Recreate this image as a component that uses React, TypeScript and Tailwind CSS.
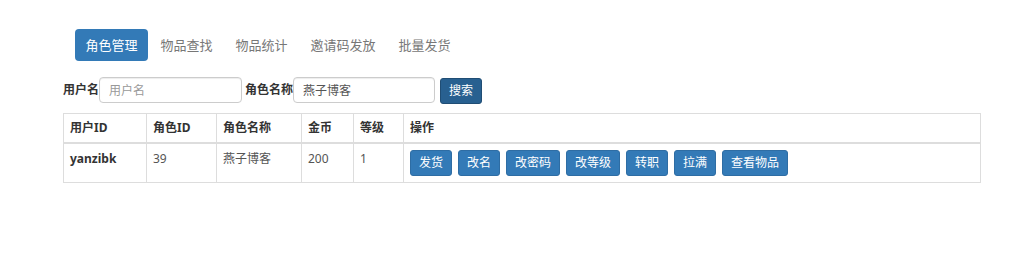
const tabs = ['角色管理', '物品查找', '物品统计', '邀请码发放', '批量发货']
const actions = ['发货', '改名', '改密码', '改等级', '转职', '拉满', '查看物品']

const App = () => {
  return (
    <div
      className="w-full h-[264px] bg-white overflow-hidden text-[12px] text-[#333]"
      style={{ fontFamily: '"Noto Sans", "Noto Sans CJK SC", sans-serif' }}
    >
      <div className="pl-[63px] pr-[43px] pt-[29px]">
        {/* Tabs */}
        <ul className="flex gap-[2px] ml-[12px]">
          {tabs.map((t, i) => (
            <li
              key={t}
              className={
                i === 0
                  ? 'px-[10.5px] py-[7px] leading-[18px] text-[13px] rounded-[4px] bg-[#337ab7] text-white'
                  : 'px-[10.5px] py-[7px] leading-[18px] text-[13px] rounded-[4px] text-[#777]'
              }
            >
              {t}
            </li>
          ))}
        </ul>

        {/* Search */}
        <div className="flex items-start mt-[16px]">
          <label className="font-bold leading-[26px] w-[36px] whitespace-nowrap">用户名</label>
          <input
            className="w-[143px] h-[26px] px-[9px] border border-[#ccc] rounded-[4px] shadow-[inset_0_1px_1px_rgba(0,0,0,0.075)] text-[#555] placeholder:text-[#999] outline-none"
            placeholder="用户名"
          />
          <label className="font-bold leading-[26px] ml-[3px] w-[48px] whitespace-nowrap">角色名称</label>
          <input
            className="w-[142px] h-[26px] px-[9px] border border-[#ccc] rounded-[4px] shadow-[inset_0_1px_1px_rgba(0,0,0,0.075)] text-[#555] outline-none"
            defaultValue="燕子博客"
          />
          <button className="ml-[5px] mt-[1px] h-[26px] px-[8px] bg-[#286090] border border-[#204d74] rounded-[3px] text-white leading-[16px]">
            搜索
          </button>
        </div>

        {/* Table */}
        <table className="mt-[9px] w-full table-fixed border-collapse">
          <colgroup>
            <col className="w-[83px]" />
            <col className="w-[70px]" />
            <col className="w-[85px]" />
            <col className="w-[52px]" />
            <col className="w-[50px]" />
            <col />
          </colgroup>
          <thead>
            <tr>
              {['用户ID', '角色ID', '角色名称', '金币', '等级', '操作'].map((h) => (
                <th
                  key={h}
                  className="border border-[#ddd] border-b-2 px-[6px] pt-[5px] pb-[6px] leading-[17px] text-left font-bold text-[#333]"
                >
                  {h}
                </th>
              ))}
            </tr>
          </thead>
          <tbody>
            <tr>
              <th className="border border-[#ddd] p-[6px] leading-[17px] text-left align-top font-bold text-[#333]">
                yanzibk
              </th>
              <td className="border border-[#ddd] p-[6px] leading-[17px] align-top text-[#555]">39</td>
              <td className="border border-[#ddd] p-[6px] leading-[17px] align-top text-[#555]">燕子博客</td>
              <td className="border border-[#ddd] p-[6px] leading-[17px] align-top text-[#555]">200</td>
              <td className="border border-[#ddd] p-[6px] leading-[17px] align-top text-[#555]">1</td>
              <td className="border border-[#ddd] p-[6px] align-top">
                <div className="flex gap-[6px]">
                  {actions.map((a) => (
                    <button
                      key={a}
                      className="h-[26px] px-[8px] bg-[#337ab7] border border-[#2e6da4] rounded-[3px] text-white leading-[16px]"
                    >
                      {a}
                    </button>
                  ))}
                </div>
              </td>
            </tr>
          </tbody>
        </table>
      </div>
    </div>
  )
}

export default App
